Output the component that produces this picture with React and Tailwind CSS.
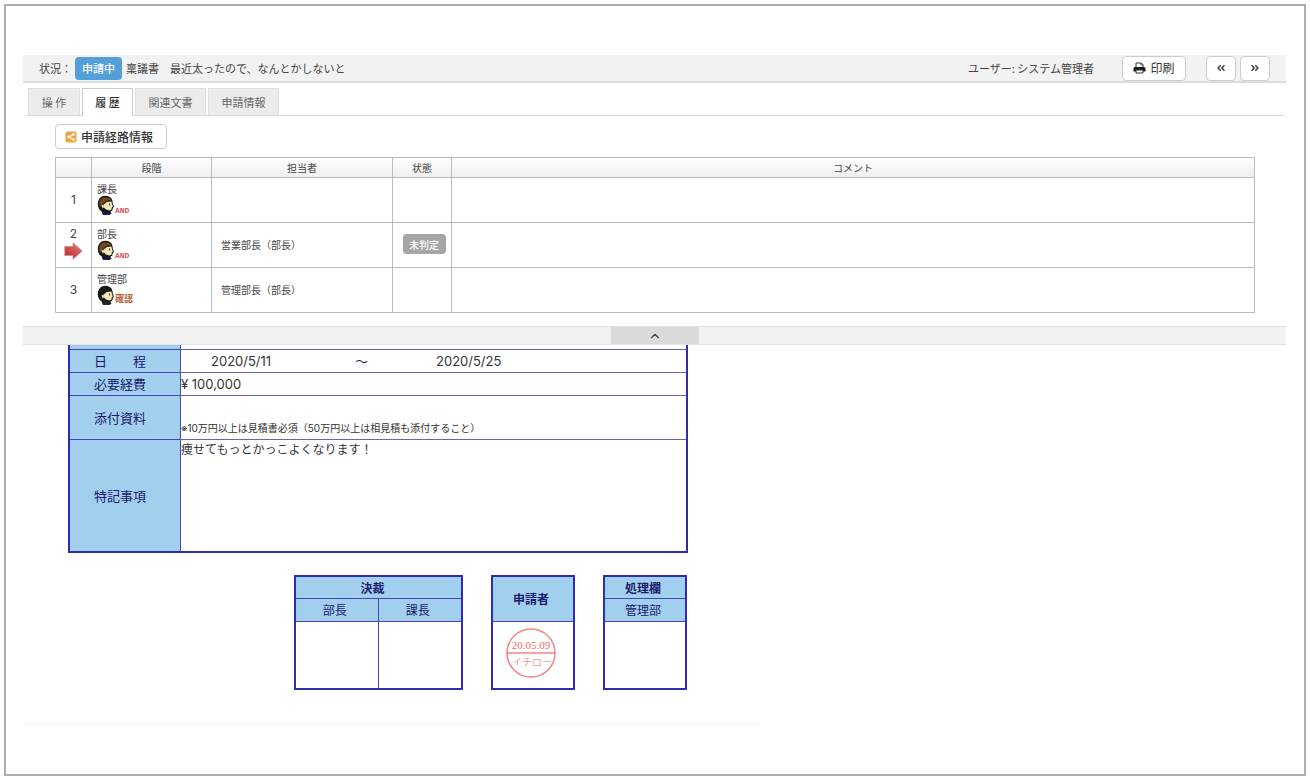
import { FaAngleDoubleLeft, FaAngleDoubleRight } from 'react-icons/fa'
import { ChevronUp } from 'lucide-react'

const ABAS = [
  { key: 'operation', label: '操 作', width: 'w-[52px]' },
  { key: 'history', label: '履 歴', width: 'w-[51px]' },
  { key: 'related', label: '関連文書', width: 'w-[71px]' },
  { key: 'info', label: '申請情報', width: 'w-[71px]' },
]

const STEPS = [
  { no: 1, stage: '課長', kind: 'and', person: '', status: '' },
  { no: 2, stage: '部長', kind: 'and', person: '営業部長（部長）', status: '未判定', current: true },
  { no: 3, stage: '管理部', kind: 'check', person: '管理部長（部長）', status: '' },
]

function ShareIcon() {
  return (
    <svg width="12" height="12" viewBox="0 0 12 12" aria-hidden="true">
      <rect x="0.5" y="0.5" width="11" height="11" rx="2" fill="#f2a33a" />
      <path d="M8.6 3.4 3.6 6l5 2.6" fill="none" stroke="#fff" strokeWidth="1.2" />
      <circle cx="8.6" cy="3.4" r="1.4" fill="#fff" />
      <circle cx="3.6" cy="6" r="1.4" fill="#fff" />
      <circle cx="8.6" cy="8.6" r="1.4" fill="#fff" />
    </svg>
  )
}

function PrintIcon() {
  return (
    <svg width="13" height="12" viewBox="0 0 13 12" aria-hidden="true">
      <path d="M3 6V1h5.500L10 2.500V6" fill="#fff" stroke="#333" />
      <path d="M8 1v2h2" fill="none" stroke="#333" strokeWidth="0.800" />
      <path d="M2 5h9a1.500 1.500 0 0 1 1.500 1.500V9.500H.500V6.500A1.500 1.500 0 0 1 2 5z" fill="#1c1c1c" />
      <path d="M3 8h7v3H3z" fill="#fff" stroke="#333" />
    </svg>
  )
}

function Face({ kind }) {
  const dark = kind === 'check'
  return (
    <svg width="18" height="20" viewBox="0 0 18 20" aria-hidden="true">
      <path d="M5 15h7l2 3.500-1 1H6z" fill={dark ? '#222' : '#15154f'} stroke="#111" strokeWidth="0.8" />
      <path d="M8.500.8C4 .8.800 4.200.800 9c0 4 2.200 7.200 5.400 8.200l2-.6 4.600.4 2.400-1.200.6-2.600 1.200-1.800-1.200-3C15.800 3.600 12.800.8 8.500.8z" fill="#191919" />
      <path d="M6.800 9.400 9.800 7l4.600-.6.600 2.600.9 2.400-1.100 1-.4 2.400-2.200.8-3.600-1.400-1.800-2z" fill="#f2e8b8" />
      {!dark && (
        <path d="M8.600 2.200c-3.600 0-5.800 2-6.400 5.200l.2 3.600 2.200 1 1.600-3.600 3.200-2.600 5-.6c-1-2-3-3-5.800-3z" fill="#75461f" />
      )}
      <path d="M4.600 10.400l2-.8.400 2.600-1.400 1.200z" fill="#f2e8b8" />
      <path d="M12.600 8.400v2" stroke="#333" strokeWidth="1" />
    </svg>
  )
}

function ArrowIcon() {
  return (
    <svg width="19" height="18" viewBox="0 0 19 18" aria-hidden="true">
      <defs>
        <linearGradient id="arrowFill" x1="0" y1="1" x2="1" y2="0">
          <stop offset="0" stopColor="#b92727" />
          <stop offset="1" stopColor="#e08080" />
        </linearGradient>
      </defs>
      <path d="M0.800 4.500H9V0.800L18.200 9 9 17.200v-3.700H0.800z" fill="url(#arrowFill)" stroke="#d98080" strokeWidth="0.800" />
    </svg>
  )
}

function Stamp() {
  return (
    <svg className="mx-auto" width="50" height="50" viewBox="0 0 50 50" fill="#ee6a64">
      <circle cx="25" cy="25" r="24" fill="none" stroke="#f28680" strokeWidth="1.500" />
      <path d="M1 25h48" stroke="#f28680" strokeWidth="1.500" />
      <text x="25" y="21" fontSize="11" textAnchor="middle" fontFamily="Liberation Serif, serif">20.05.09</text>
      <text x="26" y="38" fontSize="10" fontWeight="300" textAnchor="middle" fontFamily="Noto Sans CJK JP, serif">イチロー</text>
    </svg>
  )
}

function StatusBar() {
  return (
    <header className="flex h-7 items-center border-b-2 border-[#dcdcdc] bg-[#f2f2f2] px-4 text-[11px] leading-4 text-[#444]">
      <span>状況：</span>
      <span className="ml-[3px] flex h-[23px] w-[47px] items-center justify-center rounded bg-[#539fd8] font-medium text-white">
        申請中
      </span>
      <h1 className="ml-1">稟議書　最近太ったので、なんとかしないと</h1>
      <span className="ml-auto">ユーザー: システム管理者</span>
      <button className="ml-7 flex h-[25px] w-16 items-center justify-center gap-1 rounded border border-[#ccc] bg-white text-[12px] text-[#333]">
        <PrintIcon />
        印刷
      </button>
      <button aria-label="前へ" className="ml-5 flex h-[25px] w-[30px] items-center justify-center rounded border border-[#ccc] bg-white">
        <FaAngleDoubleLeft className="size-[10px]" />
      </button>
      <button aria-label="次へ" className="ml-1 flex h-[25px] w-[30px] items-center justify-center rounded border border-[#ccc] bg-white">
        <FaAngleDoubleRight className="size-[10px]" />
      </button>
    </header>
  )
}

function Tabs({ active }) {
  return (
    <nav role="tablist" className="mx-[2px] mt-[5px] flex gap-[2px] border-b border-[#d8d8d8] pl-[3px]">
      {ABAS.map(t => (
        <button
          key={t.key}
          role="tab"
          aria-selected={t.key === active}
          className={`whitespace-nowrap border border-b-0 text-[11px] ${t.width} ${
            t.key === active
              ? '-mb-px h-[28px] border-[#ccc] bg-white font-medium text-[#333]'
              : 'h-[27px] border-[#e0e0e0] bg-[#ececec] text-[#666]'
          }`}
        >
          {t.label}
        </button>
      ))}
    </nav>
  )
}

function RouteTable() {
  return (
    <table className="mt-2 w-full table-fixed border-collapse text-[10px] text-[#444]">
      <colgroup>
        <col className="w-9" />
        <col className="w-[120px]" />
        <col className="w-[181px]" />
        <col className="w-[59px]" />
        <col />
      </colgroup>
      <thead>
        <tr className="h-5 bg-linear-to-b from-white to-[#ededed]">
          {['', '段階', '担当者', '状態', 'コメント'].map((h, i) => (
            <th key={i} className="border border-[#bbb] p-0 font-normal">{h}</th>
          ))}
        </tr>
      </thead>
      <tbody>
        {STEPS.map(s => (
          <tr key={s.no} className="h-[45px]">
            <td className="border border-[#bbb] p-0 text-center font-['Inter'] text-[12px] leading-4">
              {s.no}
              {s.current && <div className="flex justify-center pb-1"><ArrowIcon /></div>}
            </td>
            <td className="border border-[#bbb] p-0 pb-[2px] pl-[5px] leading-3">
              {s.stage}
              <div className="flex items-end">
                <Face kind={s.kind} />
                {s.kind === 'and'
                  ? <span className="font-['Liberation_Mono'] text-[8px] font-bold leading-[8px] text-[#e0525c]">AND</span>
                  : <span className="text-[9px] font-bold leading-3 text-[#b5653f]">確認</span>}
              </div>
            </td>
            <td className="border border-[#bbb] p-0 pb-[2px] pl-[9px]">{s.person}</td>
            <td className="border border-[#bbb] p-0 pb-[2px] pl-1">
              {s.status && (
                <span className="mx-auto flex h-5 w-[43px] items-center justify-center rounded-sm bg-[#a5a5a5] font-medium text-white">
                  {s.status}
                </span>
              )}
            </td>
            <td className="border border-[#bbb] p-0"></td>
          </tr>
        ))}
      </tbody>
    </table>
  )
}

function FormRow({ label, height, last, children }) {
  return (
    <tr className={height}>
      <th className={`border-r border-[#4646b4] bg-[#a3cfef] p-0 pr-[10px] text-center font-normal text-[#1b1b6e] ${last ? '' : 'border-b'}`}>
        {label}
      </th>
      <td className={`border-[#6464bc] p-0 ${last ? 'align-top' : 'border-b'}`}>{children}</td>
    </tr>
  )
}

function RequestForm() {
  return (
    <table className="ml-[45px] w-[620px] table-fixed border-separate border-spacing-0 border-2 border-t-0 border-[#2e2eaa] text-[13px] leading-5 text-[#333]">
      <colgroup>
        <col className="w-[111px]" />
        <col />
      </colgroup>
      <tbody>
        <FormRow height="h-[5px]" />
        <FormRow label="日　　程" height="h-[23px]">
          <div className="flex pl-[30px] font-['Inter','Noto_Sans_CJK_JP',sans-serif]">
            <span className="w-36">2020/5/11</span>
            <span className="w-[81px] text-[#1b1b6e]">～</span>
            <span>2020/5/25</span>
          </div>
        </FormRow>
        <FormRow label="必要経費" height="h-[23px]">
          <span className="font-['Inter']">¥ 100,000</span>
        </FormRow>
        <FormRow label="添付資料" height="h-[44px]">
          <p className="pt-5 font-['Inter','Noto_Sans_CJK_JP',sans-serif] text-[10px]">
            ※10万円以上は見積書必須（50万円以上は相見積も添付すること）
          </p>
        </FormRow>
        <FormRow label="特記事項" height="h-[111px]" last>
          <p className="text-[12px] leading-[18px]">痩せてもっとかっこよくなります！</p>
        </FormRow>
      </tbody>
    </table>
  )
}

const SEAL_TABLE = 'table-fixed border-separate border-spacing-0 border-2 border-[#2e2eaa] text-[12px] leading-5 text-[#1b1b6e]'
const SEAL_HEAD = 'border-b border-[#4646b4] bg-[#a3cfef] p-0'

function Seals() {
  return (
    <div className="ml-[271px] mt-[22px] flex gap-7">
      <table className={`w-[169px] ${SEAL_TABLE}`}>
        <thead>
          <tr className="h-[22px]"><th colSpan={2} className={`${SEAL_HEAD} pr-3`}>決裁</th></tr>
          <tr className="h-[23px]">
            <th className={`${SEAL_HEAD} border-r pr-1 font-normal`}>部長</th>
            <th className={`${SEAL_HEAD} pr-1 font-normal`}>課長</th>
          </tr>
        </thead>
        <tbody>
          <tr className="h-[66px]">
            <td className="border-r border-[#4646b4] p-0"></td>
            <td className="p-0"></td>
          </tr>
        </tbody>
      </table>
      <table className={`w-[84px] ${SEAL_TABLE}`}>
        <thead>
          <tr className="h-[45px]"><th className={`${SEAL_HEAD} pr-1`}>申請者</th></tr>
        </thead>
        <tbody>
          <tr className="h-[66px]"><td className="p-0 pr-1 pb-1"><Stamp /></td></tr>
        </tbody>
      </table>
      <table className={`w-[84px] ${SEAL_TABLE}`}>
        <thead>
          <tr className="h-[22px]"><th className={`${SEAL_HEAD} pr-1`}>処理欄</th></tr>
          <tr className="h-[23px]"><th className={`${SEAL_HEAD} pr-1 font-normal`}>管理部</th></tr>
        </thead>
        <tbody>
          <tr className="h-[66px]"><td className="p-0"></td></tr>
        </tbody>
      </table>
    </div>
  )
}

export default function App() {
  return (
    <div className="flex min-h-screen bg-white p-1 font-['Noto_Sans_CJK_JP',sans-serif]">
      <div className="min-w-0 flex-1 border-2 border-[#adadad] pl-[17px] pr-[18px] pt-[49px]">
        <StatusBar />
        <Tabs active="history" />

        <section className="pl-8 pr-[31px] pt-2">
          <button className="flex h-[25px] w-28 items-center justify-center gap-1 rounded border border-[#ccc] bg-white pr-1 text-[12px] font-medium text-[#333]">
            <ShareIcon />
            申請経路情報
          </button>
          <RouteTable />
        </section>

        {/* Divisória recolhível */}
        <div className="mt-[13px] flex h-[19px] justify-center border-y border-[#e2e2e2] bg-[#f2f2f2]">
          <button aria-label="閉じる" className="flex w-[88px] items-center justify-center bg-[#dadada] text-[#444]">
            <ChevronUp className="size-[14px]" />
          </button>
        </div>

        <main>
          <RequestForm />
          <Seals />
        </main>
        <div className="mt-8 h-[3px] w-7/12 bg-[#fafafa]" />
      </div>
    </div>
  )
}
